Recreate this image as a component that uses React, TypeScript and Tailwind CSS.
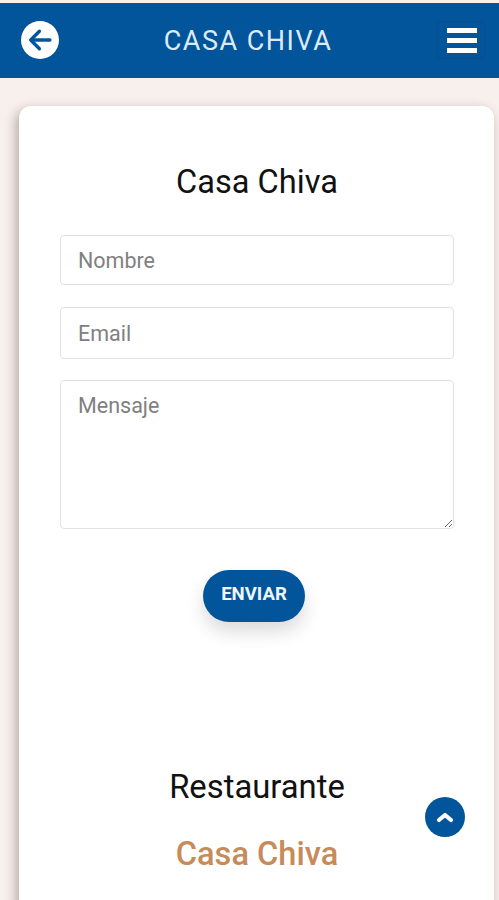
export default function App() {
  return (
    <div className="relative h-[900px] w-full overflow-hidden bg-[#f8f0ed] pt-[3px] font-['Roboto',sans-serif]">
      <header className="flex h-[75px] items-center justify-between bg-[#02549b] pl-[21px] pr-[14px]">
        <a href="#" className="-mt-[1px] flex h-[38px] w-[38px] items-center justify-center rounded-full bg-white">
          <svg viewBox="0 0 24 24" className="h-[28px] w-[28px] text-[#02549b]" fill="none" stroke="currentColor" strokeWidth="2.8" strokeLinecap="round" strokeLinejoin="round">
            <path d="M20.5 12H4.5" />
            <path d="M11.5 4.5 4 12l7.5 7.5" />
          </svg>
        </a>
        <h1 className="mt-[2px] text-[27px] tracking-[1.5px] text-[#dcebf5]">CASA CHIVA</h1>
        <button className="-mt-[1px] flex h-[38px] w-[48px] flex-col items-center justify-center gap-[5px] rounded border border-[#0a4d8a] pl-[1px]">
          <span className="h-[5px] w-[30px] bg-white" />
          <span className="h-[5px] w-[30px] bg-white" />
          <span className="h-[5px] w-[30px] bg-white" />
        </button>
      </header>

      <main className="ml-[19px] mr-[5px] mt-[28px] h-[900px] rounded-[12px] bg-white pl-[41px] pr-[40px] pt-[57px] shadow-[-3px_4px_12px_rgba(70,50,40,0.38)]">
        <h2 className="text-center text-[32.6px] leading-[38px] text-[#111]">Casa Chiva</h2>

        <form className="mt-[34px] flex flex-col">
          <input
            placeholder="Nombre"
            className="h-[50px] rounded border-[1.5px] border-[#e2e2e2] px-[17px] text-[21.5px] outline-none placeholder:text-[#808080]"
          />
          <input
            placeholder="Email"
            className="mt-[22px] h-[52px] rounded border-[1.5px] border-[#e2e2e2] px-[17px] text-[21.5px] outline-none placeholder:text-[#808080]"
          />
          <textarea
            placeholder="Mensaje"
            className="mt-[21px] h-[149px] rounded border-[1.5px] border-[#e2e2e2] px-[17px] py-[9px] text-[21.5px] outline-none placeholder:text-[#808080]"
          />
          <button
            type="button"
            className="mx-auto mt-[41px] h-[52px] w-[102px] -translate-x-[3px] rounded-full bg-[#02549b] pb-[3px] text-[18.6px] font-bold text-[#eef6fb] shadow-[0_10px_18px_rgba(0,0,0,0.14)]"
          >
            ENVIAR
          </button>
        </form>

        <h3 className="mt-[146px] text-center text-[32.8px] leading-[38px] text-[#111]">Restaurante</h3>
        <p className="mt-[29px] text-center text-[32.6px] font-medium leading-[38px] text-[#c68b59]">Casa Chiva</p>
      </main>

      <a href="#" className="absolute left-[425px] top-[797px] flex h-[40px] w-[40px] items-center justify-center rounded-full bg-[#02549b]">
        <svg viewBox="0 0 24 24" className="h-[24px] w-[24px]" fill="none" stroke="white" strokeWidth="4.2" strokeLinecap="round" strokeLinejoin="round">
          <path d="M6 15 12 10l6 5" />
        </svg>
      </a>
    </div>
  )
}
